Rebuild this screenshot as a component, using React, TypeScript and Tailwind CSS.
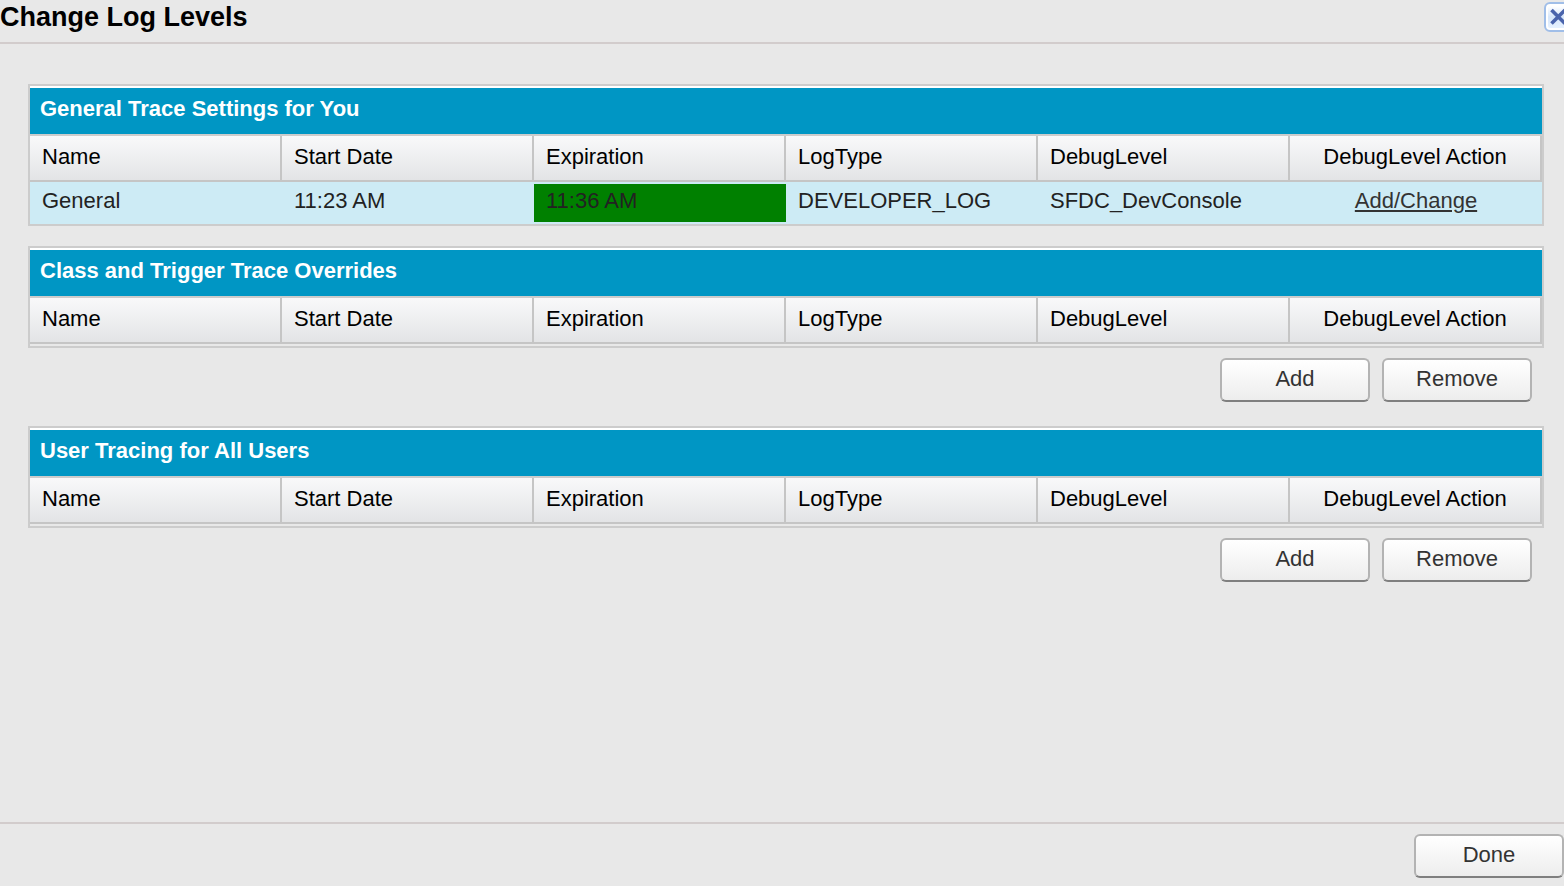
import type { ReactNode } from "react";

type TraceFlag = {
  name: string;
  startDate: string;
  expiration: string;
  logType: string;
  debugLevel: string;
};

const columns = ["Name", "Start Date", "Expiration", "LogType", "DebugLevel", "DebugLevel Action"];

const generalTraces: TraceFlag[] = [
  {
    name: "General",
    startDate: "11:23 AM",
    expiration: "11:36 AM",
    logType: "DEVELOPER_LOG",
    debugLevel: "SFDC_DevConsole",
  },
];

function Button({ children }: { children: ReactNode }) {
  return (
    <button
      type="button"
      className="h-11 w-[150px] rounded-md border-2 border-[#b3b3b3] border-b-[#7f7f7f] bg-linear-to-b from-white to-[#ededed] pb-0.5 text-[22px] leading-7 text-[#333333]"
    >
      {children}
    </button>
  );
}

function TracePanel({ id, title, rows = [] }: { id: string; title: string; rows?: TraceFlag[] }) {
  const cell = "h-[42px] border-y-2 border-[#cdebf5] px-3 pb-1 leading-7";
  return (
    <section aria-labelledby={id} className="border-2 border-[#cccccc]">
      <h2
        id={id}
        className="border-t-2 border-white bg-[#0096c4] px-2.5 pt-[7px] pb-[11px] text-[22px] leading-7 font-bold text-white"
      >
        {title}
      </h2>
      <table
        aria-labelledby={id}
        className="w-full table-fixed border-separate border-spacing-0 border-t-2 border-[#cccccc] text-left text-[22px]"
      >
        <thead>
          <tr>
            {columns.map((column) => (
              <th
                key={column}
                scope="col"
                className="h-[46px] border-r-2 border-b-2 border-[#c5c5c5] bg-linear-to-b from-[#f9f9fa] to-[#e3e4e6] px-3 pb-0.5 leading-7 font-normal whitespace-nowrap text-black last:text-center"
              >
                {column}
              </th>
            ))}
          </tr>
        </thead>
        {rows.length > 0 && (
          <tbody className="bg-[#cdebf5] text-[#222222]">
            {rows.map((row) => (
              <tr key={row.name}>
                <td className={cell}>{row.name}</td>
                <td className={cell}>{row.startDate}</td>
                <td className={`${cell} bg-[#008000]`}>{row.expiration}</td>
                <td className={cell}>{row.logType}</td>
                <td className={cell}>{row.debugLevel}</td>
                <td className={`${cell} text-center`}>
                  <a href="#debug-level" className="text-[#333333] underline decoration-2 underline-offset-2">
                    Add/Change
                  </a>
                </td>
              </tr>
            ))}
          </tbody>
        )}
      </table>
      {rows.length === 0 && <div className="h-0.5" />}
    </section>
  );
}

function PanelActions() {
  return (
    <div className="flex justify-end gap-3 px-3 pt-2.5 pb-6">
      <Button>Add</Button>
      <Button>Remove</Button>
    </div>
  );
}

export default function App() {
  return (
    <div className="flex min-h-screen flex-col overflow-x-hidden bg-[#e8e8e8] font-['Liberation_Sans',Arial,sans-serif]">
      <header className="flex h-11 items-start justify-between border-b-2 border-[#d2cccc]">
        <h1 className="text-[27px] leading-[34px] font-bold text-black">Change Log Levels</h1>
        <button type="button" aria-label="Close" className="-mr-2.5 mt-0.5 shrink-0">
          <svg width="30" height="30" viewBox="0 0 30 30" fill="none">
            <defs>
              <linearGradient id="close-fill" x1="0" y1="0" x2="0" y2="1">
                <stop offset="0" stopColor="#ffffff" />
                <stop offset="0.5" stopColor="#d6e6fb" />
                <stop offset="1" stopColor="#e6f1ff" />
              </linearGradient>
            </defs>
            <rect x="1" y="1" width="28" height="28" rx="5" fill="#ffffff" stroke="#a0bee8" strokeWidth="2" />
            <rect x="4" y="4" width="22" height="22" rx="2" fill="url(#close-fill)" />
            <path d="M7.5 8 21 21.5M21 8 7.5 21.5" stroke="#4a64ac" strokeWidth="3.6" />
          </svg>
        </button>
      </header>

      <main className="flex-1 pt-10 pr-5 pl-7">
        <TracePanel id="general-traces" title="General Trace Settings for You" rows={generalTraces} />
        <div className="h-5" />
        <TracePanel id="class-traces" title="Class and Trigger Trace Overrides" />
        <PanelActions />
        <TracePanel id="user-traces" title="User Tracing for All Users" />
        <PanelActions />
      </main>

      <footer className="flex h-16 items-start justify-end border-t-2 border-[#d2cccc] pt-2.5">
        <Button>Done</Button>
      </footer>
    </div>
  );
}
